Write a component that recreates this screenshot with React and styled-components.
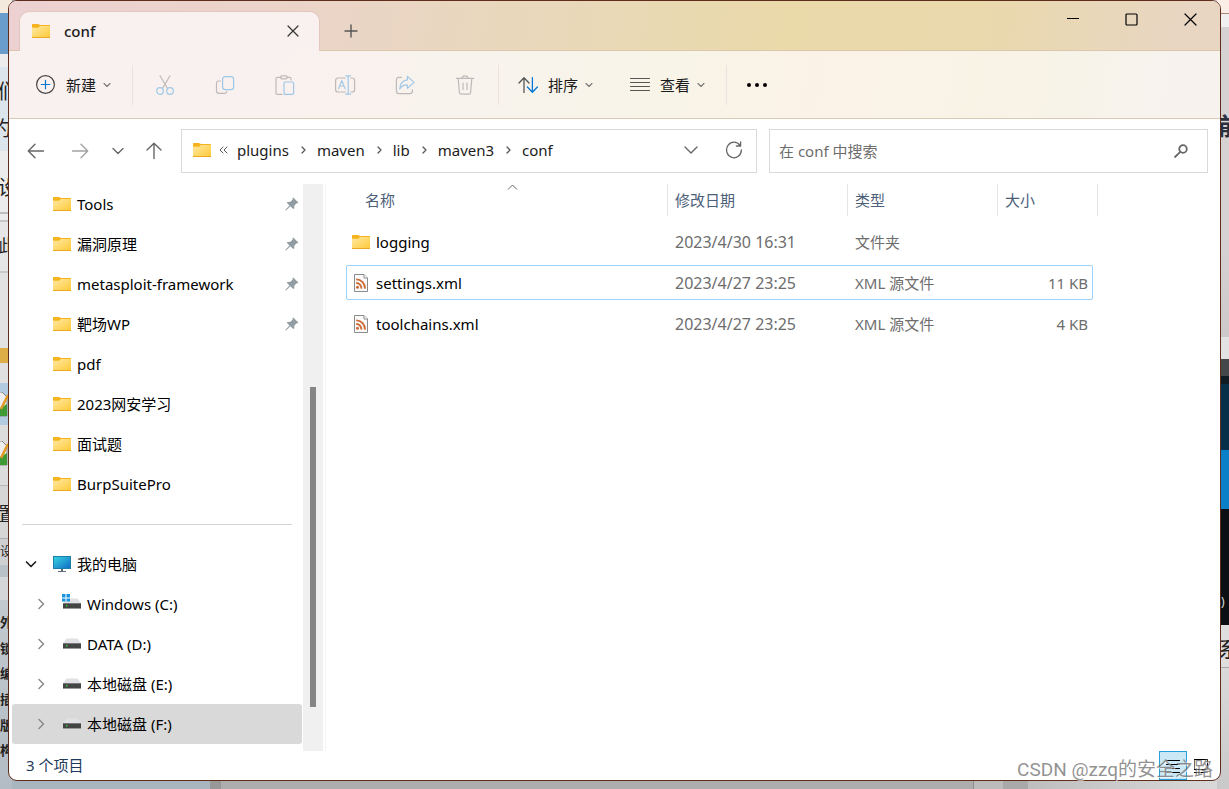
import styled, { createGlobalStyle, css } from 'styled-components';
import { useState } from 'react';

const GlobalStyle = createGlobalStyle`
    *, *::before, *::after{
        box-sizing: border-box;
    }

    body{
        margin: 0;
        overflow: hidden;
        font-family: 'Noto Sans', 'Noto Sans CJK SC', sans-serif;
        font-size: 15px;
        line-height: 20px;
        color: #000;
    }

    button, input{
        font: inherit;
        color: inherit;
        border: 0;
        background: none;
        padding: 0;
    }

    svg{
        display: block;
        flex: none;
    }
`;

/* ---------- desktop behind the window ---------- */

const Desktop = styled.div`
    position: relative;
    display: flex;
    height: 100vh;
    padding: 0 8px 8px;
    overflow: hidden;
    background: linear-gradient(to right, #a9b6c0 0 210px, #989898 210px 221px, #adadad 221px 973px, #8f8f8f 973px 974px, #bcbcbc 974px 1003px, #a9a9a9 1003px 1028px, #bebebe 1028px, #dadada);
`;

const Edge = styled.div`
    position: absolute;
    top: 0;
    bottom: 0;
    width: 12px;
`;

const LeftEdge = styled(Edge)`
    left: 0;
    background: linear-gradient(
        #f3e9dd 0 13px, #6a9ccc 13px 54px, #ececec 54px 67px, #dce4ec 67px 151px,
        #ececec 151px 212px, #bdbdbd 212px 214px, #ececec 214px 220px, #c6c6c6 220px 222px,
        #e6e6e6 222px 271px, #c9c9c9 271px 273px, #e2e2e2 273px 348px, #dcae45 348px 363px,
        #e0e0e0 363px 383px, #b3cbe0 383px 425px, #dcdcdc 425px 485px, #b8b8b8 485px 486px,
        #d6d6d6 486px 538px, #aeaeae 538px 539px, #cfd0d2 539px 565px, #b9c1c8 565px 577px,
        #d4d6d8 577px 600px, #c2c9cf 600px, #b3bcc4
    );
`;

const RightEdge = styled(Edge)`
    right: 0;
    background: linear-gradient(
        #fbeee6 0 13px, #a98a7c 13px 14px, #f0f0f0 14px 27px, #d6d2d3 27px 240px,
        #cdc9cb 337px, #e2e2e2 337px 359px, #44484a 359px 376px, #101c24 376px 384px,
        #06304a 384px 450px, #0a80c8 450px 509px, #0c1014 509px 625px, #dedede 625px 667px,
        #a8a8a8 667px 668px, #d9d9d9 668px, #c9c9c9
    );
`;

const Fragment = styled.span`
    position: absolute;
    top: ${(props) => props.$top}px;
    left: ${(props) => props.$left}px;
    font-size: ${(props) => props.$size}px;
    font-weight: ${(props) => (props.$bold ? 700 : 400)};
    line-height: 24px;
    white-space: nowrap;
    color: ${(props) => props.$color || '#222'};
`;

const Thumb = styled.svg`
    position: absolute;
    left: -8px;
    top: ${(props) => props.$top}px;
`;

const leftFragments = [
    { text: '们', top: 80, left: -2, size: 20 },
    { text: '约', top: 117, left: -9, size: 20 },
    { text: '设', top: 176, left: -2, size: 20 },
    { text: '此', top: 234, left: -2, size: 17 },
    { text: '置', top: 502, left: -2, size: 19 },
    { text: '设', top: 540, left: 0, size: 12 },
    { text: '外', top: 610, left: 0, size: 13, bold: true },
    { text: '锁', top: 636, left: 0, size: 13, bold: true },
    { text: '编', top: 661, left: 0, size: 13, bold: true },
    { text: '插', top: 687, left: 0, size: 13, bold: true },
    { text: '版', top: 713, left: 0, size: 13, bold: true },
    { text: '构', top: 738, left: 0, size: 13, bold: true },
];

/* ---------- window ---------- */

const Window = styled.div`
    position: relative;
    display: flex;
    flex-direction: column;
    flex: 1;
    min-width: 0;
    border: 1px solid #5e2d1b;
    border-radius: 9px;
    background: #fff;
    overflow: hidden;
`;

const TitleBar = styled.header`
    display: flex;
    align-items: flex-end;
    height: 50px;
    padding-left: 11px;
    background: linear-gradient(100deg, #edd1d2, #ead5c6 28%, #e9d9b6 50%, #ead9a9 64%, #ead9ac 80%, #e8d6c2 96%);
    box-shadow: inset 0 -1px #dcc7ac;
`;

const Tab = styled.div`
    display: flex;
    align-items: center;
    width: 299px;
    height: 39px;
    padding: 0 18px 2px 12px;
    border-radius: 9px 9px 0 0;
    background: #f9f1ef;
    box-shadow: 0 0 0 1px #e3c7bf;
    clip-path: inset(-1px -1px 0);
`;

const TabName = styled.span`
    flex: 1;
    margin-left: 14px;
    font-weight: 500;
    color: #1b1b1b;
`;

const IconButton = styled.button`
    display: flex;
    align-items: center;
    justify-content: center;
    flex: none;
    width: ${(props) => props.$width || 60}px;
    height: ${(props) => props.$height || 40}px;
`;

const Caption = styled.div`
    display: flex;
    align-self: flex-start;
    margin-left: auto;
`;

const Toolbar = styled.div`
    display: flex;
    align-items: center;
    height: 68px;
    border-bottom: 1px solid #dacab3;
    background: linear-gradient(100deg, #f9f1ef, #f9f1ef 22%, #f8f3ec 40%, #f8f4e7 56%, #fbf2e7 66%, #f8f3e6 84%, #f7f2ee 96%);
    color: #1b1b1b;
`;

const ToolButton = styled.button`
    display: flex;
    align-items: center;
    height: 40px;
    padding: 0 ${(props) => props.$right}px 0 ${(props) => props.$left}px;

    span{
        margin: 0 7px 0 10px;
    }
`;

const ToolGroup = styled.div`
    display: flex;
    padding: 0 3px 0 2px;
`;

const Separator = styled.div`
    width: 1px;
    height: 40px;
    background: #e9e2de;
`;

const AddressRow = styled.div`
    display: grid;
    grid-template-columns: auto 588fr 439fr;
    align-items: center;
    padding: 10px 12px 11px 5px;
    color: #666;
`;

const NavGroup = styled.div`
    display: flex;
    padding-right: 7px;
`;

const PathBar = styled.nav`
    display: flex;
    align-items: center;
    min-width: 0;
    height: 44px;
    margin-right: 12px;
    padding: 0 0 2px 11px;
    border: 1px solid #d9d9d9;
`;

const Crumbs = styled.div`
    display: flex;
    align-items: center;
    flex: 1;
    min-width: 0;
    margin-left: 8px;

    a{
        color: #1b1b1b;
        text-decoration: none;
    }

    svg{
        margin: 0 10px 0 11px;
    }

    svg:first-child{
        margin: 0 9px 0 0;
    }
`;

const SearchBar = styled.label`
    display: flex;
    align-items: center;
    min-width: 0;
    height: 44px;
    padding: 0 18px 0 9px;
    border: 1px solid #d9d9d9;

    input{
        flex: 1;
        min-width: 0;
        outline: 0;
    }

    input::placeholder{
        color: #6d6d6d;
        opacity: 1;
    }
`;

const Body = styled.div`
    display: flex;
    flex: 1;
    min-height: 0;
`;

const Sidebar = styled.nav`
    width: 294px;
    padding: 0 1px 0 3px;
    overflow: hidden;

    ul{
        margin: 0;
        padding: 0;
        list-style: none;
    }

    hr{
        height: 1px;
        margin: 20px 10px 19px;
        border: 0;
        background: #d4d4d4;
    }
`;

const SideItem = styled.button`
    display: flex;
    align-items: center;
    width: 100%;
    height: 40px;
    padding: 0 3px 0 ${(props) => (props.$nested ? 20 : 10)}px;
    border-radius: 3px;
    text-align: left;
    background: ${(props) => (props.$selected ? '#d9d9d9' : 'transparent')};
`;

const Twisty = styled.span`
    display: flex;
    justify-content: center;
    width: ${(props) => (props.$nested ? 18 : 17)}px;
    margin-right: ${(props) => (props.$nested ? 13 : 14)}px;
`;

const SideLabel = styled.span`
    flex: 1;
    margin-left: 6px;
    white-space: nowrap;
`;

const ScrollTrack = styled.div`
    display: grid;
    grid-template-rows: 203fr 320fr 44fr;
    justify-content: center;
    width: 20px;
    margin-right: 2px;
    background: #f0f0f0;
`;

const ScrollThumb = styled.div`
    grid-row: 2;
    width: 6px;
    background: #858585;
`;

const Main = styled.main`
    flex: 1;
    padding-left: 20px;
    border-left: 1px solid #f3f3f3;
`;

const FileTable = styled.table`
    width: 752px;
    table-layout: fixed;
    border-collapse: collapse;
    color: #6d6d6d;

    th{
        position: relative;
        padding: 0 0 5px;
        font-weight: 400;
    }

    td{
        height: 41px;
        padding: 0 10px 0 7px;
        white-space: nowrap;
    }

    td:first-child{
        padding-left: 6px;
        color: #000;
    }

    td:last-child{
        text-align: right;
    }
`;

const DateCell = styled.td`
    font-size: 16px;
`;

const SortButton = styled.button`
    display: flex;
    align-items: center;
    width: 100%;
    height: 32px;
    padding-left: ${(props) => (props.$first ? 19 : 7)}px;
    border-right: 1px solid #e5e5e5;
    color: #4c607a;
`;

const SortMark = styled.svg`
    position: absolute;
    top: 0;
    left: 161px;
`;

const FileRow = styled.tr`
    position: relative;

    ${(props) => props.$focused && css`
        &::after{
            content: '';
            position: absolute;
            inset: 3px 5px 3px 0;
            border: 1px solid #99d1ff;
            border-radius: 2px;
        }
    `}
`;

const FileName = styled.div`
    display: flex;
    align-items: center;
    gap: 6px;
`;

const StatusBar = styled.footer`
    display: flex;
    align-items: center;
    height: 29px;
    padding: 0 5px 0 17px;
    color: #1e395b;
`;

const ItemCount = styled.span`
    flex: 1;
    padding-bottom: 2px;
`;

const ViewButton = styled.button`
    display: flex;
    align-items: center;
    justify-content: center;
    width: 28px;
    height: 29px;
    border: 1px solid ${(props) => (props.$active ? '#26a0da' : 'transparent')};
    background: ${(props) => (props.$active ? '#cbe8f6' : 'transparent')};
`;

const Watermark = styled.div`
    position: absolute;
    right: 16px;
    bottom: 7px;
    font-family: Roboto, 'Noto Sans CJK SC', sans-serif;
    font-size: 19px;
    line-height: 24px;
    color: rgba(110, 110, 110, 0.75);
    text-shadow: 1px 1px 0 rgba(255, 255, 255, 0.6);
    pointer-events: none;
`;

/* ---------- icons ---------- */

const Line = ({ w = 20, h = w, color = '#666', width = 1.2, children, ...rest }) => (
    <svg width={w} height={h} viewBox={`0 0 ${w} ${h}`} fill='none' stroke={color} strokeWidth={width} strokeLinecap='round' strokeLinejoin='round' {...rest}>
        {children}
    </svg>
);

const FolderIcon = () => (
    <svg width='18' height='16' viewBox='0 0 18 16'>
        <defs>
            <linearGradient id='folder' x1='0' y1='0' x2='1' y2='1'>
                <stop offset='0' stopColor='#ffe9a2' />
                <stop offset='1' stopColor='#ffc937' />
            </linearGradient>
        </defs>
        <path d='M0 1.5Q0 1 .6 1H6L8 2H17.4Q18 2 18 2.6V5H0Z' fill='#f6b31d' />
        <path d='M0 4.7H6.2L8 3H18V14.4Q18 15 17.4 15H.6Q0 15 0 14.4Z' fill='url(#folder)' />
        <path d='M0 14H18V14.4Q18 15 17.4 15H.6Q0 15 0 14.4Z' fill='#e9a820' />
    </svg>
);

const XmlIcon = () => (
    <svg width='18' height='20' viewBox='0 0 18 20'>
        <path d='M2.5 1.5H12L15.5 5V18.5H2.5Z' fill='#fafafa' stroke='#8b8b8b' />
        <path d='M12 1.5V5H15.5' fill='#fff' stroke='#8b8b8b' />
        <g fill='none' stroke='#cc6b33' strokeWidth='1.9'>
            <path d='M4.2 6.4A8.8 8.8 0 0 1 13 15.6' />
            <path d='M4.2 10A5.2 5.2 0 0 1 9.4 15.6' />
        </g>
        <circle cx='5.5' cy='14.2' r='1.5' fill='#cc6b33' />
    </svg>
);

const PcIcon = () => (
    <svg width='18' height='18' viewBox='0 0 18 18'>
        <defs>
            <linearGradient id='screen' x1='0' y1='0' x2='1' y2='1'>
                <stop offset='0' stopColor='#37d5e3' />
                <stop offset='1' stopColor='#0f6cc4' />
            </linearGradient>
        </defs>
        <rect x='.5' y='1.5' width='17' height='12' fill='url(#screen)' stroke='#1b7fa8' />
        <path d='M8 14H10V16H13V17H5V16H8Z' fill='#5d6b75' />
    </svg>
);

const DiskIcon = ({ system }) => (
    <svg width='18' height='18' viewBox='0 0 18 18' overflow='visible'>
        <path d='M3.5 4H14.5L17.5 8.5H.5Z' fill='#dfe1e4' stroke='#dfe1e4' strokeLinejoin='round' />
        <rect y='8' width='18' height='5' fill='#444' />
        <path d='M0 8.5H18' stroke='#777' />
        <path d='M0 13.5H18' stroke='#999' />
        <rect x='3' y='10' width='1.4' height='1.4' fill='#29e03c' />
        {system && (
            <>
                <path d='M-1 -1.5H7V6H-1Z' fill='#fff' />
                <path d='M-1 -1H2.5V2.5H-1ZM3.5 -1H7V2.5H3.5ZM-1 3.5H2.5V6.5H-1ZM3.5 3.5H7V6.5H3.5Z' fill='#1a94dd' />
            </>
        )}
    </svg>
);

const PinIcon = () => (
    <svg width='14' height='14' viewBox='0 0 14 14'>
        <path d='M8.2 .6L13.4 5.4L12.6 6.3L11.6 6.2L9.4 8.6L9.2 11.6L8.2 12L5.4 9.3L1.2 13.3L.4 13.4L.6 12.6L4.5 8.4L1.8 5.8L2.4 4.9L5.4 4.8L7.7 2.5L7.5 1.4Z' fill='#929da3' />
    </svg>
);

const SmallChevron = () => <Line w={8} color='#777' width={1.1}><path d='M1 2.5L4 5.5L7 2.5' /></Line>;
const CrumbChevron = () => <Line w={7} h={10} color='#555' width={1.3}><path d='M2 2L5 5L2 8' /></Line>;

const grey = '#bfbab9';
const blue = '#9fc8e8';

const editTools = [
    {
        name: '剪切',
        icon: <Line color={grey}><path d='M5 .8L12.4 13.2M15 .8L7.6 13.2' /><circle cx='5' cy='16' r='3.3' stroke={blue} /><circle cx='15' cy='16' r='3.3' stroke={blue} /></Line>,
    },
    {
        name: '复制',
        icon: <Line color={grey}><path d='M5.5 6H3.6Q1.5 6 1.5 8.2V15.8Q1.5 18.4 4.1 18.4H9.5Q11.6 18.4 11.6 16.6' /><rect x='7.6' y='1.6' width='11' height='13' rx='2.6' stroke={blue} /></Line>,
    },
    {
        name: '粘贴',
        icon: <Line color={grey}><path d='M6 2.4H2.4Q1 2.4 1 3.8V18Q1 19.4 2.4 19.4H7M12 2.4H14.6Q16 2.4 16 3.8V5' /><rect x='5.6' y='.8' width='6.6' height='3' rx='1.4' /><rect x='9' y='7' width='9.6' height='12.4' rx='1.4' stroke={blue} /></Line>,
    },
    {
        name: '重命名',
        icon: <Line w={22} h={20} color={grey}><path d='M11.4 3H4.2Q1.6 3 1.6 5.6V14.4Q1.6 17 4.2 17H11.4M16.8 3H18Q20.6 3 20.6 5.6V14.4Q20.6 17 18 17H16.8' /><path d='M4.6 13.6L7.8 5.6L11 13.6M5.8 11H9.8M11.8 .8H16.6M11.8 19.2H16.6M14.2 .8V19.2' stroke={blue} /></Line>,
    },
    {
        name: '共享',
        icon: <Line color={grey}><path d='M6.4 2.4H4Q1.4 2.4 1.4 5V16Q1.4 18.6 4 18.6H14.8Q17.4 18.6 17.4 16V14.8' /><path d='M12.4 1.4L19 7.4L12.4 13.2V10Q7.6 9.6 4.8 14Q5.2 5.6 12.4 4.8Z' stroke={blue} /></Line>,
    },
    {
        name: '删除',
        icon: <Line color={grey}><path d='M1.4 3.4H18.6M7 3.2Q7.2 .8 10 .8T13 3.2M3.2 3.6L4.4 17.4Q4.6 19.2 6.4 19.2H13.6Q15.4 19.2 15.6 17.4L16.8 3.6M8 8V14.6M12 8V14.6' /></Line>,
    },
];

const crumbs = ['plugins', 'maven', 'lib', 'maven3', 'conf'];

const quickFolders = [
    { name: 'Tools', pinned: true },
    { name: '漏洞原理', pinned: true },
    { name: 'metasploit-framework', pinned: true },
    { name: '靶场WP', pinned: true },
    { name: 'pdf' },
    { name: '2023网安学习' },
    { name: '面试题' },
    { name: 'BurpSuitePro' },
];

const disks = ['Windows (C:)', 'DATA (D:)', '本地磁盘 (E:)', '本地磁盘 (F:)'];

const files = [
    { name: 'logging', date: '2023/4/30 16:31', type: '文件夹', size: '' },
    { name: 'settings.xml', date: '2023/4/27 23:25', type: 'XML 源文件', size: '11 KB' },
    { name: 'toolchains.xml', date: '2023/4/27 23:25', type: 'XML 源文件', size: '4 KB' },
];

const columns = [
    { name: '名称', width: 322 },
    { name: '修改日期', width: 180 },
    { name: '类型', width: 150 },
    { name: '大小', width: 100 },
];

const DesktopEdges = () => (
    <div aria-hidden='true'>
        <LeftEdge>
            {leftFragments.map((item) => (
                <Fragment key={item.top} $top={item.top} $left={item.left} $size={item.size} $bold={item.bold}>{item.text}</Fragment>
            ))}
            {[392, 441].map((top) => (
                <Thumb key={top} $top={top} width='16' height='25' viewBox='0 0 16 25'>
                    <path d='M0 0H10L15 5V24H0Z' fill='#eee' stroke='#888' />
                    <path d='M0 13L8 16L15 12V24H0Z' fill='#3f9a35' />
                    <path d='M16 3L9 17' stroke='#e29a25' strokeWidth='2.5' />
                </Thumb>
            ))}
        </LeftEdge>
        <RightEdge>
            <Fragment $top={114} $left={1} $size={24} $bold $color='#2b3040'>前</Fragment>
            <Fragment $top={590} $left={4} $size={12} $color='#ddd'>)</Fragment>
            <Fragment $top={636} $left={1} $size={22}>系</Fragment>
        </RightEdge>
    </div>
);

const TitleBarComponent = () => (
    <TitleBar>
        <Tab>
            <FolderIcon />
            <TabName>conf</TabName>
            <button type='button' aria-label='关闭标签页'>
                <Line w={16} color='#333'><path d='M3 3L13 13M13 3L3 13' /></Line>
            </button>
        </Tab>
        <IconButton type='button' aria-label='新标签页' $width={64}>
            <Line w={14} color='#555' width={1.4}><path d='M7 1V13M1 7H13' /></Line>
        </IconButton>
        <Caption>
            <IconButton type='button' aria-label='最小化' $width={59} $height={36}>
                <Line w={12} color='#000' width={1}><path d='M0 5.5H12' /></Line>
            </IconButton>
            <IconButton type='button' aria-label='最大化' $width={59} $height={36}>
                <Line w={13} color='#000'><rect x='1' y='1' width='11' height='11' rx='1' /></Line>
            </IconButton>
            <IconButton type='button' aria-label='关闭' $width={59} $height={36}>
                <Line w={13} color='#000'><path d='M1 1L12 12M12 1L1 12' /></Line>
            </IconButton>
        </Caption>
    </TitleBar>
);

const ToolbarComponent = () => (
    <Toolbar>
        <ToolButton type='button' $left={27} $right={21}>
            <Line color='#444'><circle cx='9.5' cy='9.5' r='8.9' /><path d='M9.5 5.3V13.7M5.3 9.5H13.7' stroke='#0078d4' /></Line>
            <span>新建</span>
            <SmallChevron />
        </ToolButton>
        <Separator />
        <ToolGroup>
            {editTools.map((tool) => (
                <IconButton key={tool.name} type='button' aria-label={tool.name}>{tool.icon}</IconButton>
            ))}
        </ToolGroup>
        <Separator />
        <ToolButton type='button' $left={19} $right={18}>
            <Line color='#555' width={1.3}><path d='M6 17.4V2.8M1 8L6 2.8L11 8' /><path d='M14.4 2.6V17.2M9.4 12L14.4 17.2L19.4 12' stroke='#0078d4' /></Line>
            <span>排序</span>
            <SmallChevron />
        </ToolButton>
        <ToolButton type='button' $left={19} $right={21}>
            <Line color='#555' width={1.1}><path d='M.5 3.5H19.5M.5 7.5H19.5M.5 11.5H19.5M.5 15.5H19.5' /></Line>
            <span>查看</span>
            <SmallChevron />
        </ToolButton>
        <Separator />
        <IconButton type='button' aria-label='更多'>
            <svg width='20' height='4' viewBox='0 0 20 4'>
                <circle cx='2' cy='2' r='2' /><circle cx='10' cy='2' r='2' /><circle cx='18' cy='2' r='2' />
            </svg>
        </IconButton>
    </Toolbar>
);

const AddressComponent = () => {
    const [keyword, setKeyword] = useState('');

    return (
        <AddressRow>
            <NavGroup>
                <IconButton type='button' aria-label='后退' $width={44}>
                    <Line w={18} width={1.4}><path d='M16.5 9H1.5M8 2.2L1.3 9L8 15.8' /></Line>
                </IconButton>
                <IconButton type='button' aria-label='前进' $width={44}>
                    <Line w={18} color='#a3a3a3' width={1.4}><path d='M1.5 9H16.5M10 2.2L16.7 9L10 15.8' /></Line>
                </IconButton>
                <IconButton type='button' aria-label='最近位置' $width={32}>
                    <Line w={12} width={1.4}><path d='M1 3.5L6 8.5L11 3.5' /></Line>
                </IconButton>
                <IconButton type='button' aria-label='向上' $width={40}>
                    <Line w={18} width={1.4}><path d='M9 16.5V1.5M2 8L9 1.3L16 8' /></Line>
                </IconButton>
            </NavGroup>
            <PathBar>
                <FolderIcon />
                <Crumbs>
                    <Line w={9} h={10} color='#555' width={1}><path d='M4 2L1 5L4 8M8 2L5 5L8 8' /></Line>
                    {crumbs.map((name, index) => [
                        index > 0 && <CrumbChevron key={name + '-sep'} />,
                        <a key={name} href='#'>{name}</a>,
                    ])}
                </Crumbs>
                <IconButton type='button' aria-label='历史' $width={43}>
                    <Line w={14} width={1.4}><path d='M1 4L7 10L13 4' /></Line>
                </IconButton>
                <IconButton type='button' aria-label='刷新' $width={44}>
                    <Line w={18} width={1.3}><path d='M15 4.4A7.4 7.8 0 1 0 16.4 9M15.6 .8V5H11.4' /></Line>
                </IconButton>
            </PathBar>
            <SearchBar>
                <input type='text' aria-label='搜索' placeholder='在 conf 中搜索' value={keyword} onChange={(e) => setKeyword(e.target.value)} />
                <Line w={16} width={1.8}><circle cx='10' cy='6' r='3.8' /><path d='M7 9.2L2 14' /></Line>
            </SearchBar>
        </AddressRow>
    );
};

const SidebarComponent = () => {
    const [selected, setSelected] = useState('本地磁盘 (F:)');

    return (
        <Sidebar>
            <ul>
                {quickFolders.map((folder) => (
                    <li key={folder.name}>
                        <SideItem type='button' $selected={selected === folder.name} onClick={() => setSelected(folder.name)}>
                            <Twisty />
                            <FolderIcon />
                            <SideLabel>{folder.name}</SideLabel>
                            {folder.pinned && <PinIcon />}
                        </SideItem>
                    </li>
                ))}
            </ul>
            <hr />
            <ul>
                <li>
                    <SideItem type='button' onClick={() => setSelected('我的电脑')} $selected={selected === '我的电脑'}>
                        <Twisty><Line w={12} color='#222' width={1.7}><path d='M1.5 4L6 8.5L10.5 4' /></Line></Twisty>
                        <PcIcon />
                        <SideLabel>我的电脑</SideLabel>
                    </SideItem>
                </li>
                {disks.map((name, index) => (
                    <li key={name}>
                        <SideItem type='button' $nested $selected={selected === name} onClick={() => setSelected(name)}>
                            <Twisty $nested><Line w={12} color='#8a8a8a' width={1.5}><path d='M4 1.5L8.5 6L4 10.5' /></Line></Twisty>
                            <DiskIcon system={index === 0} />
                            <SideLabel>{name}</SideLabel>
                        </SideItem>
                    </li>
                ))}
            </ul>
        </Sidebar>
    );
};

const FileListComponent = () => (
    <Main>
        <FileTable>
            <colgroup>
                {columns.map((column) => <col key={column.name} width={column.width} />)}
            </colgroup>
            <thead>
                <tr>
                    {columns.map((column, index) => (
                        <th key={column.name}>
                            <SortButton type='button' $first={index === 0}>{column.name}</SortButton>
                            {index === 0 && (
                                <SortMark width='11' height='7' viewBox='0 0 11 7'>
                                    <path d='M1 5.5L5.5 1L10 5.5' fill='none' stroke='#666' />
                                </SortMark>
                            )}
                        </th>
                    ))}
                </tr>
            </thead>
            <tbody>
                {files.map((file) => (
                    <FileRow key={file.name} $focused={file.name === 'settings.xml'}>
                        <td>
                            <FileName>
                                {file.name.endsWith('.xml') ? <XmlIcon /> : <FolderIcon />}
                                {file.name}
                            </FileName>
                        </td>
                        <DateCell>{file.date}</DateCell>
                        <td>{file.type}</td>
                        <td>{file.size}</td>
                    </FileRow>
                ))}
            </tbody>
        </FileTable>
    </Main>
);

const App = () => {
    return (
        <>
            <GlobalStyle />
            <Desktop>
                <DesktopEdges />
                <Window>
                    <TitleBarComponent />
                    <ToolbarComponent />
                    <AddressComponent />
                    <Body>
                        <SidebarComponent />
                        <ScrollTrack><ScrollThumb /></ScrollTrack>
                        <FileListComponent />
                    </Body>
                    <StatusBar>
                        <ItemCount>3 个项目</ItemCount>
                        <ViewButton type='button' aria-label='详细信息' $active>
                            <Line w={14} h={14} color='#000' width={1}><path d='M.5 1.5H13.5M.5 5.5H13.5M.5 9.5H13.5M.5 13.5H13.5' /></Line>
                        </ViewButton>
                        <ViewButton type='button' aria-label='大图标'>
                            <Line w={14} h={16} color='#000' width={1}><path d='M.5 1.5H13.5V11.5H.5ZM.5 14.5H13.5' /></Line>
                        </ViewButton>
                    </StatusBar>
                </Window>
                <Watermark>CSDN @zzq的安全之路</Watermark>
            </Desktop>
        </>
    );
};

export default App;
